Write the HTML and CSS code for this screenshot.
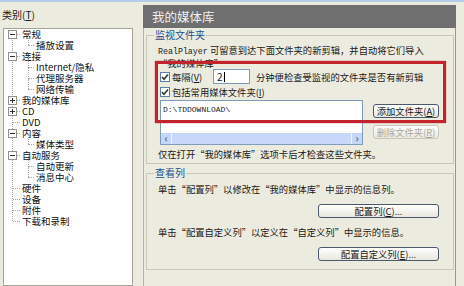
FILE: index.html
```html
<!DOCTYPE html>
<html>
<head>
<meta charset="UTF-8">
<title>我的媒体库</title>
<link rel="stylesheet" href="styles.css">
</head>
<body>
<div class="topline"></div>
<div class="main">
    <div class="left">
        <div class="cat-label">类别(<u>T</u>)</div>
        <div class="tree">
            <div class="tree-list">
                <div class="row"><span class="tog"></span>常规</div>
                <div class="row child last">播放设置</div>
                <div class="row"><span class="tog"></span>连接</div>
                <div class="row child">Internet/隐私</div>
                <div class="row child">代理服务器</div>
                <div class="row child last">网络传输</div>
                <div class="row"><span class="tog plus"></span>我的媒体库</div>
                <div class="row"><span class="tog plus"></span>CD</div>
                <div class="row">DVD</div>
                <div class="row"><span class="tog"></span>内容</div>
                <div class="row child last">媒体类型</div>
                <div class="row"><span class="tog"></span>自动服务</div>
                <div class="row child">自动更新</div>
                <div class="row child last">消息中心</div>
                <div class="row">硬件</div>
                <div class="row">设备</div>
                <div class="row">附件</div>
                <div class="row">下载和录制</div>
            </div>
        </div>
    </div>
    <div class="right">
        <div class="header">我的媒体库</div>
        <div class="panel">
            <fieldset class="group watch">
                <legend>监视文件夹</legend>
                <p class="intro"><span class="mono">RealPlayer</span> 可留意到达下面文件夹的新剪辑，并自动将它们导入<br>“我的媒体库”</p>
                <div class="check-row row1">
                    <span class="cb"><svg width="8" height="8" viewBox="0 0 8 8"><polyline points="1,4 3,6.2 7,1.5" fill="none" stroke="#2b3a2b" stroke-width="1.6"/></svg></span>
                    <span class="every">每隔(<u>V</u>)</span>
                    <span class="num">2<i class="caret"></i></span>
                    <span class="after">分钟便检查受监视的文件夹是否有新剪辑</span>
                </div>
                <div class="check-row row2">
                    <span class="cb"><svg width="8" height="8" viewBox="0 0 8 8"><polyline points="1,4 3,6.2 7,1.5" fill="none" stroke="#2b3a2b" stroke-width="1.6"/></svg></span>
                    <span>包括常用媒体文件夹(<u>I</u>)</span>
                </div>
                <div class="files">
                    <div class="listbox">
                        <div class="path">D:\TDDOWNLOAD\</div>
                        <div class="hscroll">
                            <span class="arrow">‹</span>
                            <span class="thumb"></span>
                            <span class="arrow">›</span>
                        </div>
                    </div>
                    <div class="btns">
                        <div class="btn">添加文件夹(<u>A</u>)</div>
                        <div class="btn disabled">删除文件夹(<u>R</u>)</div>
                    </div>
                </div>
                <p class="note">仅在打开“我的媒体库”选项卡后才检查这些文件夹。</p>
            </fieldset>
            <fieldset class="group columns">
                <legend>查看列</legend>
                <p class="txt">单击“配置列”以修改在“我的媒体库”中显示的信息列。</p>
                <div class="btn cfg">配置列(<u>C</u>)...</div>
                <p class="txt second">单击“配置自定义列”以定义在“自定义列”中显示的信息。</p>
                <div class="btn cfg">配置自定义列(<u>E</u>)...</div>
            </fieldset>
            <div class="highlight"></div>
        </div>
    </div>
</div>
</body>
</html>
```

FILE: styles.css
```css
body{
    margin:0;
    width:464px;
    height:286px;
    overflow:hidden;
    background:#ecebdf;
    font-family:"Noto Sans CJK SC",sans-serif;
    font-size:9.3px;
    color:#1a1a1a;
}
p{margin:0;}
u{text-decoration:underline;}

.topline{
    height:2px;
    background:#b8cbe6;
}
.main{
    display:flex;
    height:284px;
}

/* 左侧类别树 */
.left{
    width:140px;
    display:flex;
    flex-direction:column;
}
.cat-label{
    height:19px;
    padding:7px 0 0 2px;
    line-height:12px;
    font-size:10px;
}
.tree{
    flex:1;
    width:130px;
    margin-left:3px;
    box-sizing:border-box;
    border:1px solid #a5a59a;
    background:#fff;
    font-size:9.5px;
}
.tree-list{
    position:relative;
}
.tree-list::before{
    content:"";
    position:absolute;
    left:8px;
    top:5px;
    height:187px;
    border-left:1px dotted #a8a8a8;
}
.row{
    position:relative;
    height:11px;
    line-height:11px;
    padding-left:18px;
    white-space:nowrap;
    color:#111;
}
.row::before{
    content:"";
    position:absolute;
    left:9px;
    top:5px;
    width:7px;
    border-top:1px dotted #a8a8a8;
}
.row.child{
    padding-left:32px;
}
.row.child::before{
    left:24px;
    width:6px;
}
.row.child::after{
    content:"";
    position:absolute;
    left:24px;
    top:-5px;
    height:11px;
    border-left:1px dotted #a8a8a8;
}
.row.child.last::after{
    height:10px;
}
.tog{
    position:absolute;
    left:4px;
    top:1px;
    width:9px;
    height:9px;
    box-sizing:border-box;
    border:1px solid #919191;
    background:#fff;
    z-index:1;
}
.tog::before{
    content:"";
    position:absolute;
    left:1px;
    top:3px;
    width:5px;
    height:1px;
    background:#333;
}
.tog.plus::after{
    content:"";
    position:absolute;
    left:3px;
    top:1px;
    width:1px;
    height:5px;
    background:#333;
}

/* 右侧 */
.right{
    flex:1;
    display:flex;
    flex-direction:column;
    padding:3px 0 0 3px;
}
.header{
    width:313px;
    height:23px;
    box-sizing:border-box;
    padding-left:9px;
    background:#6f6f6f;
    color:#f0f0f0;
    font-size:12.5px;
    line-height:23px;
}
.panel{
    position:relative;
    flex:1;
    width:313px;
    box-sizing:border-box;
    border-left:1px solid #b5b3a6;
    border-right:1px solid #9a988c;
}
.group{
    margin:1px 1px 0 2px;
    padding:0 14px 3px 11px;
    border:1px solid #cac8b9;
    min-width:0;
}
.group legend{
    padding:0 1px;
    margin-left:-4px;
    font-size:10px;
    line-height:12px;
    color:#22508f;
}
.intro{
    margin-top:4px;
    line-height:10.5px;
    white-space:nowrap;
}
.mono{
    font-family:"Liberation Mono",monospace;
    font-size:8.3px;
}
.check-row{
    display:flex;
    align-items:center;
    white-space:nowrap;
}
.row1{
    height:15px;
    margin-top:1px;
}
.row2{
    height:12px;
    margin-top:2px;
}
.cb{
    display:flex;
    align-items:center;
    justify-content:center;
    width:10px;
    height:10px;
    box-sizing:border-box;
    margin:0 2px;
    border:1px solid #5a7ea6;
    background:#fff;
}
.every{
    width:41px;
}
.num{
    display:flex;
    align-items:center;
    width:37px;
    height:15px;
    box-sizing:border-box;
    padding-left:3px;
    border:1px solid #7f9db9;
    background:#fff;
    font-size:10px;
}
.caret{
    width:1px;
    height:10px;
    margin-left:1px;
    background:#000;
}
.after{
    margin-left:6px;
}
.files{
    display:flex;
    justify-content:space-between;
    margin-top:2px;
}
.listbox{
    display:flex;
    flex-direction:column;
    width:203px;
    height:45px;
    margin-left:2px;
    box-sizing:border-box;
    border:1px solid #7f9db9;
    background:#fff;
}
.path{
    flex:1;
    padding:4px 0 0 2px;
    font-family:"Liberation Mono",monospace;
    font-size:8px;
    line-height:10px;
}
.hscroll{
    display:flex;
    height:11px;
    background:#eef3fd;
}
.arrow{
    width:10px;
    background:#c5d6f6;
    color:#4d6185;
    font-size:10px;
    line-height:10px;
    text-align:center;
    font-weight:bold;
}
.thumb{
    flex:1;
    margin:0 1px;
    background:#c9d8f8;
}
.btns{
    display:flex;
    flex-direction:column;
    gap:7px;
    width:66px;
    padding-top:4px;
}
.btn{
    height:14px;
    box-sizing:border-box;
    border:1px solid #4a5a6c;
    border-radius:3px;
    background:linear-gradient(#ffffff,#e8e7df);
    line-height:12px;
    text-align:center;
    white-space:nowrap;
}
.btn.disabled{
    border-color:#c9c7ba;
    color:#aca899;
}
.note{
    margin-top:3px;
    line-height:12px;
}
.group.columns{
    margin-top:3px;
    padding-bottom:8px;
}
.txt{
    margin-top:4px;
    line-height:12px;
    white-space:nowrap;
}
.txt.second{
    margin-top:8px;
}
.btn.cfg{
    width:121px;
    margin:9px 0 0 auto;
}

/* 红色标注框 */
.highlight{
    position:absolute;
    left:11px;
    top:33px;
    width:291px;
    height:62px;
    box-sizing:border-box;
    border:3px solid #c4222c;
    box-shadow:0 0 1px #c4222c;
}
```
